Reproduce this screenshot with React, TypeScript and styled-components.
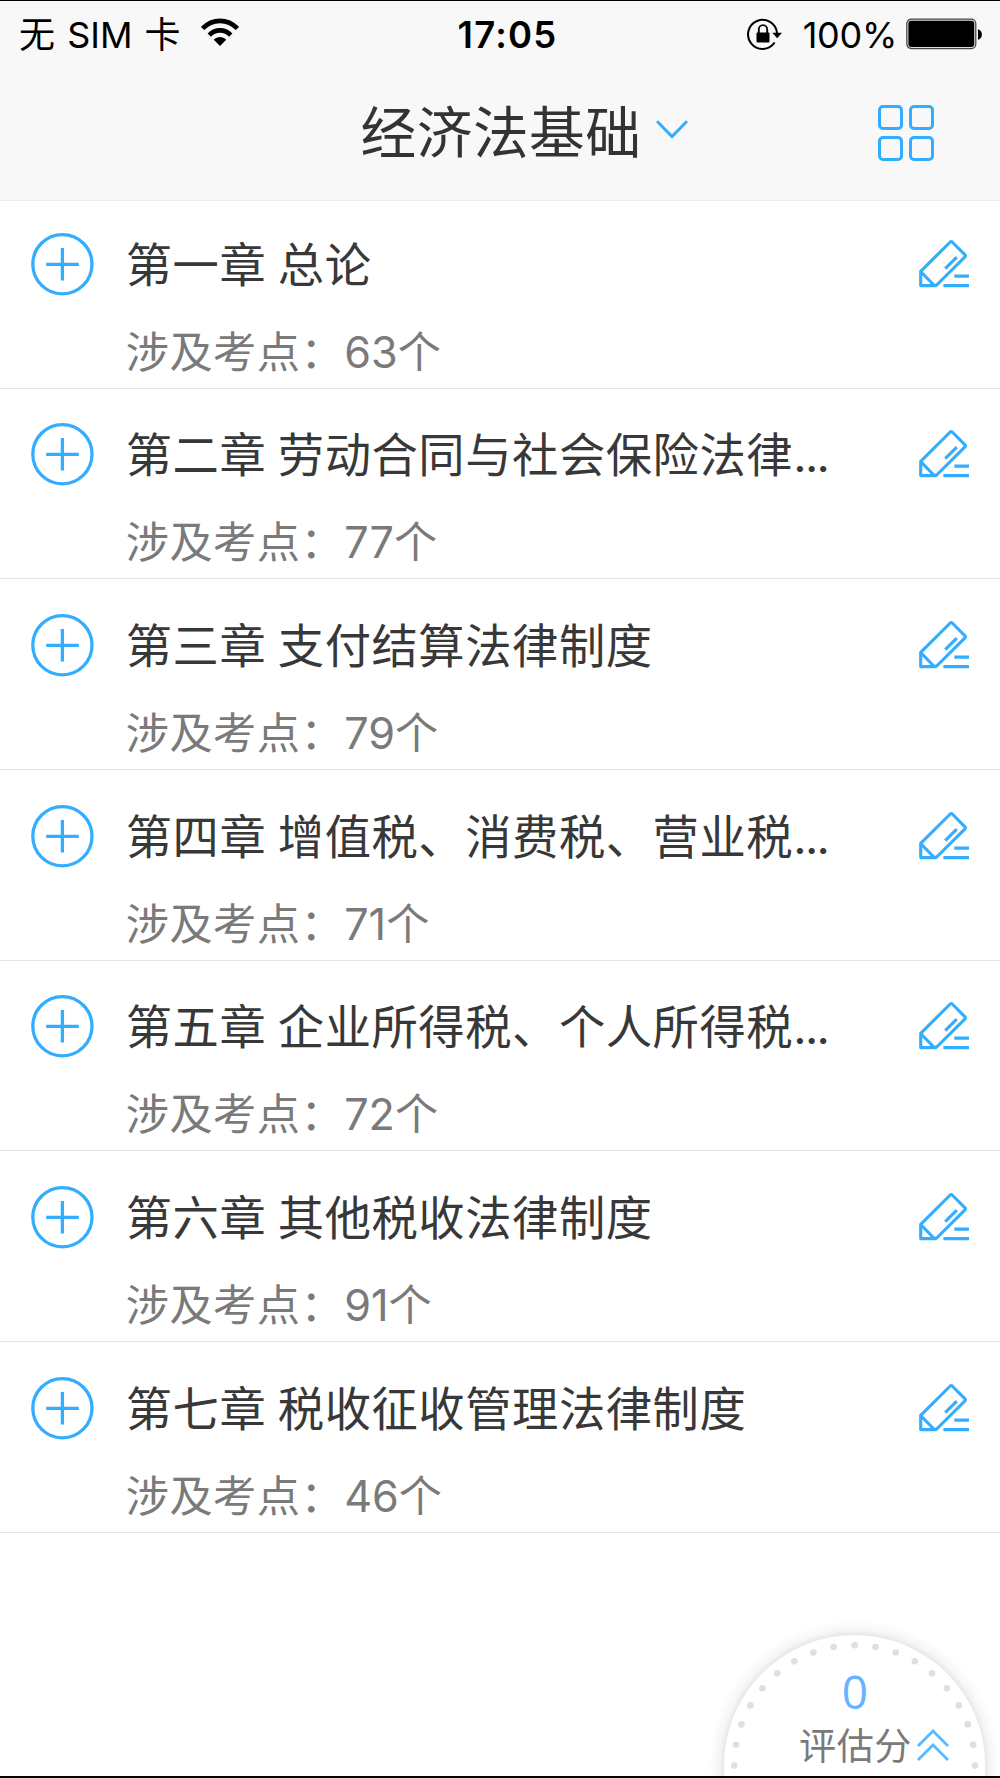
import React from "react";
import styled, { createGlobalStyle } from "styled-components";

const BLUE = "#33adff";
const FONT = 'Inter, "Noto Sans CJK SC", sans-serif';

const GlobalStyle = createGlobalStyle`
  html, body { margin: 0; padding: 0; background: #fff; }
  * { box-sizing: border-box; }
`;

const Screen = styled.main`
  position: relative;
  display: flex;
  flex-direction: column;
  width: 1000px;
  height: 1778px;
  overflow: hidden;
  background: #fff;
  border-top: 1.5px solid #000;
  border-bottom: 2px solid #000;
  font-family: ${FONT};
  white-space: nowrap;
`;

const StatusBar = styled.div`
  display: grid;
  grid-template-columns: 1fr auto 1fr;
  align-items: center;
  height: 66px;
  padding: 0 17px 0 19px;
  background: #f8f8f8;
  color: #000;
  font-size: 36px;
  line-height: 66px;
`;

const StatusLeft = styled.div`
  display: flex;
  align-items: center;
  gap: 19px;
  padding-top: 1px;
  word-spacing: 2px;

  svg {
    margin: 0 0 5px 1px;
  }
`;

const Clock = styled.time`
  font-weight: 600;
  font-size: 36.5px;
  letter-spacing: 1.2px;
  padding-left: 13px;
`;

const StatusRight = styled.div`
  display: flex;
  align-items: center;
  justify-content: flex-end;

  svg {
    margin-bottom: 2px;
  }
`;

const Percent = styled.span`
  margin: 0 9px 0 20px;
  letter-spacing: -0.3px;
`;

const NavBar = styled.header`
  display: grid;
  grid-template-columns: 1fr auto 1fr;
  align-items: center;
  height: 134px;
  padding: 0 66px 2px 0;
  background: #f8f8f8;
  border-bottom: 1px solid #ececec;
`;

const NavTitle = styled.h1`
  grid-column: 2;
  display: flex;
  align-items: center;
  gap: 15px;
  margin: 0 0 0 115px;
  color: #333;
  font-size: 55.7px;
  font-weight: 400;
  line-height: 80px;
  letter-spacing: 0.5px;

  svg {
    margin-bottom: 5px;
  }
`;

const GridButton = styled.button`
  justify-self: end;
  display: grid;
  grid-template-columns: 25px 25px;
  gap: 6px;
  padding: 0;
  border: 0;
  background: none;
`;

const GridCell = styled.span`
  height: 25px;
  border: 3px solid ${BLUE};
  border-radius: 5px;
`;

const List = styled.ul`
  margin: 0;
  padding: 0;
  list-style: none;
`;

const Row = styled.li<{ $first?: boolean }>`
  display: grid;
  grid-template-columns: 64px 1fr 52px;
  column-gap: 31px;
  align-items: start;
  height: ${(p) => (p.$first ? 187.8 : 190.65)}px;
  padding: ${(p) => (p.$first ? 31 : 33.6)}px 29px 0 31px;
  border-bottom: 1px solid #e4e5ea;
`;

const Texts = styled.div`
  display: flex;
  flex-direction: column;
  padding-top: 2px;
  margin-left: -0.3px;
`;

const Chapter = styled.h2`
  margin: 0;
  color: #383838;
  font-size: 46.3px;
  font-weight: 400;
  line-height: 62px;
  letter-spacing: 0.55px;
  word-spacing: -2px;
`;

const Dots = styled.span`
  letter-spacing: -1.6px;
`;

const Points = styled.p`
  margin: 25px 0 0;
  color: #7a7a7a;
  font-size: 43.2px;
  line-height: 62px;
`;

const Label = styled.span`
  letter-spacing: 0.5px;
`;

const EditSlot = styled.span`
  display: flex;
  padding-top: 8px;
`;

const Gauge = styled.aside`
  position: absolute;
  left: 704px;
  top: 1614px;
  width: 300px;
  height: 162px;
  overflow: hidden;
`;

const GaugeDial = styled.svg`
  position: absolute;
  inset: 0;
`;

const GaugeText = styled.div`
  position: relative;
  display: flex;
  flex-direction: column;
  align-items: center;
  padding: 49px 0 0 2px;
`;

const Score = styled.strong`
  color: #66b3ff;
  font-family: "Open Sans", sans-serif;
  font-size: 46px;
  font-weight: 400;
  line-height: 54px;
`;

const ScoreLabel = styled.div`
  display: flex;
  align-items: center;
  gap: 7px;
  margin: 2px 0 0 38px;
  color: #7a7a7a;
  font-size: 37.2px;
  line-height: 54px;
  letter-spacing: 0.5px;

  svg {
    margin: 0 0 4px -2px;
  }
`;

const chapters = [
  { title: "第一章 总论", count: 63 },
  { title: "第二章 劳动合同与社会保险法律", more: true, count: 77 },
  { title: "第三章 支付结算法律制度", count: 79 },
  { title: "第四章 增值税、消费税、营业税", more: true, count: 71 },
  { title: "第五章 企业所得税、个人所得税", more: true, count: 72 },
  { title: "第六章 其他税收法律制度", count: 91 },
  { title: "第七章 税收征收管理法律制度", count: 46 },
];

const WifiIcon = () => (
  <svg width="38" height="29" viewBox="0 0 38 29">
    <g fill="none" stroke="#000" strokeWidth="4.6">
      <path d="M1.6 10.5C11.5 .3 26.5 .3 36.4 10.5" />
      <path d="M8.2 17.2C14.5 10.8 23.5 10.8 29.8 17.2" />
    </g>
    <path d="M12.8 21.8C16.4 18.2 21.6 18.2 25.2 21.8L19 28Z" />
  </svg>
);

const LockIcon = () => (
  <svg width="36" height="32" viewBox="0 0 36 32">
    <path d="M27.6 24.5A14.5 14.5 0 1 1 30 15" fill="none" stroke="#000" strokeWidth="2" />
    <path d="M25.3 14.8H35L30.2 20.2Z" />
    <rect x="9.5" y="14.5" width="13" height="10" rx="1" />
    <path d="M11.8 15V11.3a4.2 4.2 0 0 1 8.4 0V15" fill="none" stroke="#000" strokeWidth="1.9" />
  </svg>
);

const BatteryIcon = () => (
  <svg width="77" height="32" viewBox="0 0 77 32">
    <rect x="0.8" y="1.2" width="69" height="29.4" rx="4.5" fill="#ddd" stroke="#444" strokeWidth="1.2" />
    <rect x="2.4" y="2.8" width="65.8" height="26.2" rx="3" />
    <path d="M72 11.2C77.2 12.2 77.2 20.8 72 21.8Z" />
  </svg>
);

const PlusIcon = () => (
  <svg width="64" height="64" viewBox="0 0 64 64" fill="none" stroke={BLUE} strokeWidth="3.3">
    <circle cx="31.4" cy="32.2" r="29.6" />
    <path d="M15.2 32.4H47.8M31.4 16V48.6" />
  </svg>
);

const EditIcon = () => (
  <svg width="52" height="48" viewBox="0 0 52 48" fill="none" stroke={BLUE} strokeWidth="3.1" strokeLinejoin="round">
    <path d="M1.7 31.3L31.2 2Q32.2 1.2 33.2 2L46 14.8Q46.8 15.8 46 16.8L18.2 44.5Q17 45.6 15.2 45.6H1.7Z" />
    <path d="M2.2 32.2L14.8 45" />
    <path d="M26.2 28.6L37.8 17.2" />
    <path d="M35.3 36.1H50M24.4 45.6H50" />
  </svg>
);

const dialDots = Array.from({ length: 19 }, (_, i) => {
  const angle = ((i * 10 - 90) * Math.PI) / 180;
  return { x: 150.6 + 120.4 * Math.sin(angle), y: 150.6 - 120.4 * Math.cos(angle) };
});

export default function App() {
  return (
    <Screen>
      <GlobalStyle />
      <StatusBar>
        <StatusLeft>
          <span>无 SIM 卡</span>
          <WifiIcon />
        </StatusLeft>
        <Clock>17:05</Clock>
        <StatusRight>
          <LockIcon />
          <Percent>100%</Percent>
          <BatteryIcon />
        </StatusRight>
      </StatusBar>
      <NavBar>
        <NavTitle>
          经济法基础
          <svg width="32" height="20" viewBox="0 0 32 20" fill="none" stroke={BLUE} strokeWidth="3">
            <path d="M1 1.2L16 16.5L31 1.2" />
          </svg>
        </NavTitle>
        <GridButton aria-label="菜单">
          <GridCell />
          <GridCell />
          <GridCell />
          <GridCell />
        </GridButton>
      </NavBar>
      <List>
        {chapters.map((c, i) => (
          <Row key={c.title} $first={i === 0}>
            <PlusIcon />
            <Texts>
              <Chapter>
                {c.title}
                {c.more && <Dots>...</Dots>}
              </Chapter>
              <Points>
                <Label>涉及考点：</Label>
                {c.count}个
              </Points>
            </Texts>
            <EditSlot>
              <EditIcon />
            </EditSlot>
          </Row>
        ))}
      </List>
      <Gauge>
        <GaugeDial width="300" height="162" viewBox="0 0 300 162">
          <defs>
            <radialGradient id="halo" gradientUnits="userSpaceOnUse" cx="150.6" cy="150.6" r="146">
              <stop offset="0.89" stopColor="#000" stopOpacity="0.1" />
              <stop offset="0.93" stopColor="#000" stopOpacity="0.035" />
              <stop offset="1" stopColor="#000" stopOpacity="0" />
            </radialGradient>
          </defs>
          <circle cx="150.6" cy="150.6" r="146" fill="url(#halo)" />
          <circle cx="150.6" cy="150.6" r="130.6" fill="#fff" />
          {dialDots.map((d, i) => (
            <circle key={i} cx={d.x} cy={d.y} r="3.3" fill="#dddfe1" />
          ))}
        </GaugeDial>
        <GaugeText>
          <Score>0</Score>
          <ScoreLabel>
            评估分
            <svg width="32" height="34" viewBox="0 0 32 34" fill="none" stroke="#59b9ff" strokeWidth="2.8">
              <path d="M1 18L16 3L31 18M1 32L16 17L31 32" />
            </svg>
          </ScoreLabel>
        </GaugeText>
      </Gauge>
    </Screen>
  );
}
